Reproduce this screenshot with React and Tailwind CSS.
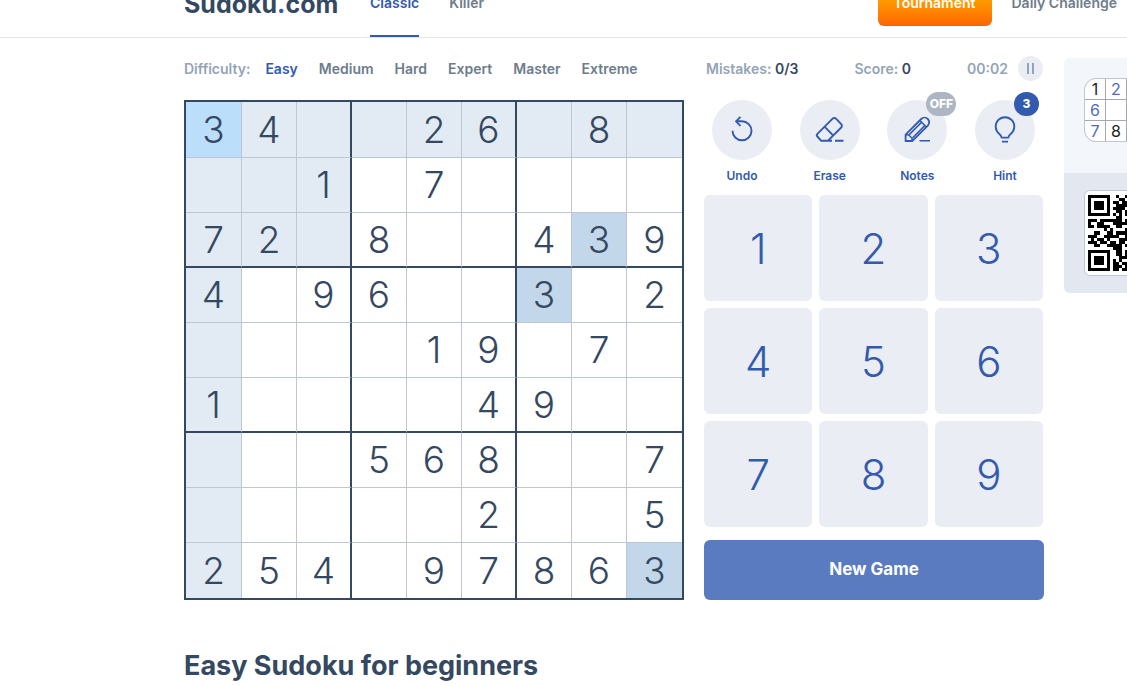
import React from 'react';

const board = [
  '34..26.8.',
  '..1.7....',
  '72.8..439',
  '4.96..3.2',
  '....19.7.',
  '1....49..',
  '...568..7',
  '.....2..5',
  '254.97863',
];

function cellBg(r, c) {
  if (r === 0 && c === 0) return 'bg-[#bbdefb]';
  if (board[r][c] === '3') return 'bg-[#c3d7ea]';
  if (r === 0 || c === 0 || (r < 3 && c < 3)) return 'bg-[#e2ebf3]';
  return 'bg-white';
}

function cellBorder(r, c) {
  const right = c === 8 ? '' : c % 3 === 2 ? 'border-r-2 border-r-[#344861]' : 'border-r border-r-[#bec6d4]';
  const bottom = r === 8 ? '' : r % 3 === 2 ? 'border-b-2 border-b-[#344861]' : 'border-b border-b-[#bec6d4]';
  return right + ' ' + bottom;
}

function Board() {
  return (
    <table aria-label="Sudoku grid" className="w-[500px] shrink-0 table-fixed border-separate border-spacing-0 border-2 border-[#344861]">
      <colgroup>
        {board.map((_, c) => <col key={c} className={c === 0 ? 'w-[56px]' : 'w-[55px]'} />)}
      </colgroup>
      <tbody>
        {board.map((row, r) => (
          <tr key={r}>
            {row.split('').map((d, c) => (
              <td key={c} className={`p-0 text-center align-middle text-[37px] leading-10 font-light text-[#344861] ${r === 0 ? 'h-[56px]' : 'h-[55px]'} ${cellBg(r, c)} ${cellBorder(r, c)}`}>
                {d === '.' ? '' : d}
              </td>
            ))}
          </tr>
        ))}
      </tbody>
    </table>
  );
}

const stroke = { fill: 'none', stroke: 'currentColor', strokeWidth: 1.9, strokeLinecap: 'butt', strokeLinejoin: 'round' };

function UndoIcon() {
  return (
    <svg width="30" height="30" viewBox="0 0 30 30" aria-hidden="true" {...stroke}>
      <path d="M5.5 15.8a9.5 9.5 0 1 0 9.5-9.5H9" />
      <path d="M13.5 1.8 9 6.3l4.5 4.5" />
    </svg>
  );
}

function EraseIcon() {
  return (
    <svg width="30" height="30" viewBox="0 0 30 30" aria-hidden="true" {...stroke}>
      <path d="M17 25.8H6.2L2.4 21.5a2 2 0 0 1 0-2.7L17.6 3.7a2.4 2.4 0 0 1 3.4 0l5.2 5.4a2.4 2.4 0 0 1 0 3.4L12.8 25.8" />
      <path d="m9.5 11.6 8.6 8.8M20 25.8h8.5" />
    </svg>
  );
}

function NotesIcon() {
  return (
    <svg width="30" height="30" viewBox="0 0 30 30" aria-hidden="true" {...stroke} strokeWidth="1.8">
      <path d="M3.6 26.2v-6.4L19.2 4.2a4.4 4.4 0 0 1 6.6 6.6L10.2 26.2Z" transform="translate(0 -.2)" />
      <path d="m3.6 19.8 3.2.2 3.2 3.2v3M18 5.6l6.6 6.6M7.2 19.6 19.4 7.4M10.6 22.8 22.8 10.6M17.5 25.8h10.5" strokeWidth="1.5" />
    </svg>
  );
}

function HintIcon() {
  return (
    <svg width="30" height="30" viewBox="0 0 30 30" aria-hidden="true" {...stroke}>
      <path d="M11.6 22.6c0-1.8-.8-2.6-2.2-3.7A9.3 9.3 0 1 1 20.6 18.900c-1.400 1.100-2.200 1.900-2.200 3.700ZM12 26.600h6" />
    </svg>
  );
}

const tools = [
  { label: 'Undo', Icon: UndoIcon },
  { label: 'Erase', Icon: EraseIcon },
  { label: 'Notes', Icon: NotesIcon, badge: 'OFF', badgeClass: 'bg-[#adb6c2] left-[39px] w-[30px]' },
  { label: 'Hint', Icon: HintIcon, badge: '3', badgeClass: 'bg-[#325aaf] left-[39px] w-[25px]' },
];

function Tool({ label, Icon, badge, badgeClass }) {
  return (
    <button type="button" className="flex w-[60px] flex-col items-center text-[#325aaf]">
      <span className="relative flex size-[60px] items-center justify-center rounded-full bg-[#eaedf4]">
        <Icon />
        {badge && (
          <span className={`absolute -top-2 flex h-6 items-center justify-center rounded-full text-xs font-extrabold text-white ${badgeClass}`}>{badge}</span>
        )}
      </span>
      <span className="mt-2 text-xs leading-4 font-semibold">{label}</span>
    </button>
  );
}

const qrRows = [
  '11111110010010',
  '10000010001101',
  '10111010110110',
  '10111010011111',
  '10111010111101',
  '10000010011010',
  '11111110101010',
  '00000000011001',
  '11101111111011',
  '10011000111110',
  '11011110011001',
  '00000101000011',
  '00110011011110',
  '11100111110010',
  '01011010001111',
  '11101101101101',
  '00110011111011',
  '00000000111000',
  '11111110011010',
  '10000010011011',
  '10111010001110',
  '10111010101001',
  '10111010110111',
  '10000010111010',
  '11111110110111',
];

function QrCode() {
  const cells = qrRows.map((row, y) => row.split('').map((v, x) => (v === '1' ? `M${x} ${y}h1v1h-1z` : '')).join('')).join('');
  return (
    <svg width="78" height="76" viewBox="0 0 25 25" preserveAspectRatio="none" shapeRendering="crispEdges" role="img" aria-label="QR code">
      <path d={cells} fill="#000" />
    </svg>
  );
}

const mini = [['1', '2', '3'], ['6', '', '4'], ['7', '8', '9']];

function Promo() {
  return (
    <aside className="w-[300px] shrink-0 overflow-hidden rounded-md bg-[#f3f6fb]">
      <div className="h-[115px] px-5 pt-5">
        <div className="grid size-16 grid-cols-3 grid-rows-3 gap-px overflow-hidden rounded-xl border border-[#bec6d4] bg-[#a4a7ae]">
          {mini.flat().map((d, i) => (
            <span key={i} className={`flex items-center justify-center bg-white text-base leading-none ${['1', '8', '9'].includes(d) ? 'text-[#222]' : 'text-[#4a6bc0]'}`}>{d}</span>
          ))}
        </div>
      </div>
      <div className="h-[120px] bg-[#e2e7f0] px-5 pt-[17px]">
        <div className="flex size-[86px] items-center justify-center rounded-md border border-[#bec6d4] bg-white">
          <QrCode />
        </div>
      </div>
    </aside>
  );
}

const levels = ['Easy', 'Medium', 'Hard', 'Expert', 'Master', 'Extreme'];

export default function App() {
  return (
    <div className="h-screen overflow-hidden bg-white font-['Inter',sans-serif] text-[#344861]">
      <header className="flex h-[38px] items-end border-b border-[#e5e8f0] pl-[184px]">
        <a href="#home" className="mb-[17px] w-[186px] text-[25px] leading-8 font-bold">Sudoku<span className="text-[#325aaf]">.</span>com</a>
        <nav className="flex flex-1 items-end gap-[30px] text-sm leading-5 font-semibold text-[#6e7c8c]">
          <a href="#classic" className="border-b-2 border-[#325aaf] pb-[22px] text-[#325aaf]">Classic</a>
          <a href="#killer" className="pb-6">Killer</a>
        </nav>
        <nav className="flex shrink-0 items-end gap-5 pr-2.5 text-sm leading-5 font-semibold text-[#6e7c8c]">
          <a href="#tournament" className="mb-[11px] flex h-[46px] w-[114px] items-center justify-center rounded-md bg-linear-to-b from-[#ffc000] to-[#ff6400] text-white">Tournament</a>
          <a href="#daily" className="pb-6 whitespace-nowrap">Daily Challenge</a>
        </nav>
      </header>
      <main className="flex items-start pt-5 pl-[184px]">
        <section className="w-[500px] shrink-0">
          <div className="flex h-[42px] gap-[21px] text-sm leading-[22px] font-semibold text-[#6e7c8c]">
            <div className="flex gap-[15px]">
              <span className="text-[#94a3b7]">Difficulty:</span>
              <a href="#easy" className="text-[#325aaf]">Easy</a>
            </div>
            {levels.slice(1).map((l) => (
              <a key={l} href={`#${l.toLowerCase()}`}>{l}</a>
            ))}
          </div>
          <Board />
          <h1 className="mt-12 text-[27px] leading-9 font-bold">Easy Sudoku for beginners</h1>
        </section>
        <section className="ml-5 w-[340px] shrink-0">
          <div className="flex h-[42px] items-start justify-between pr-px pl-0.5 text-sm leading-[22px] font-semibold text-[#94a3b7]">
            <span>Mistakes: <span className="text-[#344861]">0/3</span></span>
            <span>Score: <span className="text-[#344861]">0</span></span>
            <span className="flex gap-2.5">
              00:02
              <button type="button" aria-label="Pause" className="-mt-0.5 flex size-[25px] items-center justify-center gap-[3px] rounded-full bg-[#eaedf4]">
                <span className="h-[11px] w-0.5 bg-[#94a3b7]" />
                <span className="h-[11px] w-0.5 bg-[#94a3b7]" />
              </button>
            </span>
          </div>
          <div className="flex h-[95px] justify-between pr-[9px] pl-2">
            {tools.map((t) => <Tool key={t.label} {...t} />)}
          </div>
          <div className="grid grid-cols-3 gap-[7px] pr-px">
            {['1', '2', '3', '4', '5', '6', '7', '8', '9'].map((n) => (
              <button key={n} type="button" className="h-[106px] rounded-md bg-[#eaedf4] text-[42px] font-light text-[#325aaf]">{n}</button>
            ))}
          </div>
          <button type="button" className="mt-[13px] h-[60px] w-full rounded-md bg-[#5a7bc0] text-[17px] font-bold text-white">New Game</button>
        </section>
        <div className="ml-5"><Promo /></div>
      </main>
    </div>
  );
}
